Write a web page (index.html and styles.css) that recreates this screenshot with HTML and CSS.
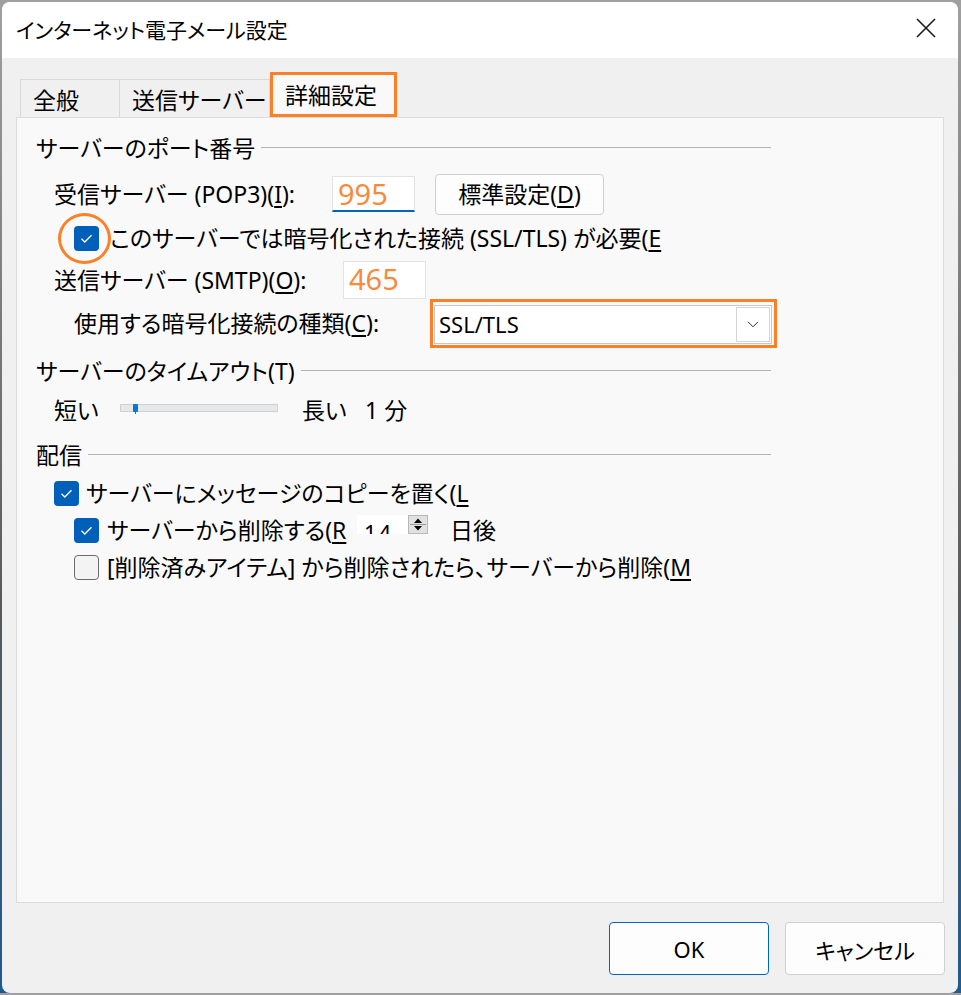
FILE: index.html
```html
<!DOCTYPE html>
<html lang="ja">
<head>
  <meta charset="UTF-8">
  <title>インターネット電子メール設定</title>
  <link rel="stylesheet" href="styles.css">
</head>
<body>
  <div class="window">
    <div class="titlebar">
      <span class="title">インターネット電子メール設定</span>
      <svg class="close" width="20" height="20" viewBox="0 0 20 20">
        <path d="M1 1 L19 19 M19 1 L1 19" stroke="#1b1b1b" stroke-width="1.6" fill="none"/>
      </svg>
    </div>

    <div class="content">
      <div class="tabs">
        <div class="tab tab-general">全般</div>
        <div class="tab tab-send">送信サーバー</div>
        <div class="tab tab-active">詳細設定</div>
      </div>

      <div class="panel">
        <div class="group-head">サーバーのポート番号</div>

        <div class="row r-pop">
          <span class="lbl-pop">受信サーバー (POP3)(<u>I</u>):</span>
          <div class="num-input active-input">995</div>
          <div class="std-btn">標準設定(<u>D</u>)</div>
        </div>

        <div class="row r-ssl">
          <span class="check checked ringed">
            <svg width="25" height="25" viewBox="0 0 25 25"><path d="M7.5 12.8 L10.8 16 L17.5 9.3" stroke="#fff" stroke-width="1.4" fill="none"/></svg>
            <span class="ring"></span>
          </span>
          <span class="ssl-text">このサーバーでは暗号化された接続 (SSL/TLS) が必要(<u>E</u></span>
        </div>

        <div class="row r-smtp">
          <span class="lbl-smtp">送信サーバー (SMTP)(<u>O</u>):</span>
          <div class="num-input">465</div>
        </div>

        <div class="row r-type">
          <span class="lbl-type">使用する暗号化接続の種類(<u>C</u>):</span>
          <div class="select-mark">
            <div class="select">
              <span class="select-value">SSL/TLS</span>
              <span class="select-btn">
                <svg width="12" height="7" viewBox="0 0 12 7"><path d="M1 0.8 L6 5.8 L11 0.8" stroke="#333" stroke-width="1" fill="none"/></svg>
              </span>
            </div>
          </div>
        </div>

        <div class="group-head h2">サーバーのタイムアウト(T)</div>

        <div class="row r-slider">
          <span class="lbl-short">短い</span>
          <div class="track"><span class="thumb"></span></div>
          <span class="lbl-long">長い</span>
          <span class="minutes">1 分</span>
        </div>

        <div class="group-head h3">配信</div>

        <div class="row r-c1">
          <span class="check checked">
            <svg width="25" height="25" viewBox="0 0 25 25"><path d="M7.5 12.8 L10.8 16 L17.5 9.3" stroke="#fff" stroke-width="1.4" fill="none"/></svg>
          </span>
          <span class="c1-text">サーバーにメッセージのコピーを置く(<u>L</u></span>
        </div>

        <div class="row r-c2">
          <span class="check checked">
            <svg width="25" height="25" viewBox="0 0 25 25"><path d="M7.5 12.8 L10.8 16 L17.5 9.3" stroke="#fff" stroke-width="1.4" fill="none"/></svg>
          </span>
          <span class="c2-text c2-label">サーバーから削除する(<u>R</u></span>
          <div class="spin">
            <span class="spin-value">14</span>
            <span class="spin-arrows">
              <svg width="20" height="19" viewBox="0 0 20 19">
                <path d="M6 8 L10 3.5 L14 8 Z" fill="#000"/>
                <path d="M6 11 L10 15.5 L14 11 Z" fill="#000"/>
                <path d="M2 9.5 H18" stroke="#9a9a9a" stroke-width="1"/>
              </svg>
            </span>
          </div>
          <span class="days">日後</span>
        </div>

        <div class="row r-c3">
          <span class="check"></span>
          <span class="c2-text">[削除済みアイテム] から削除されたら、サーバーから削除(<u>M</u></span>
        </div>
      </div>

      <div class="footer">
        <div class="btn btn-ok">OK</div>
        <div class="btn">キャンセル</div>
      </div>
    </div>
  </div>
</body>
</html>
```

FILE: styles.css
```css
body {
  margin: 0;
  background: linear-gradient(#a0a0a0, #5a5a5a 60%, #1f5b8f);
  font-family: "Noto Sans", "Noto Sans CJK JP", sans-serif;
  font-feature-settings: "palt";
  color: #000;
}
.window {
  margin: 2px 3px 0 2px;
  height: 991px;
  background: #f0f0f0;
  border-radius: 8px;
  overflow: hidden;
  display: flex;
  flex-direction: column;
}
.titlebar {
  height: 56px;
  background: #fff;
  display: flex;
  align-items: center;
  justify-content: space-between;
  padding: 0 22px 0 14px;
}
.title {
  font-size: 21px;
  line-height: 26px;
}
.close {
  margin-top: -4px;
}
.content {
  flex: 1;
  display: flex;
  flex-direction: column;
  padding: 14px 13px 18px 14px;
}
.tabs {
  display: flex;
  align-items: flex-end;
  padding-left: 4px;
  height: 45px;
}
.tab {
  box-sizing: border-box;
  height: 38px;
  border: 1px solid #d9d9d9;
  border-bottom: none;
  padding-left: 12px;
  font-size: 23px;
  line-height: 28px;
  white-space: nowrap;
  display: flex;
  align-items: center;
  padding-top: 3px;
}
.tab-general {
  width: 100px;
}
.tab-send {
  width: 150px;
  border-left: none;
}
.tab-active {
  width: 127px;
  height: 45px;
  border: 3px solid #fb8027;
  background: #f9f9f9;
  padding-top: 0;
}
.panel {
  box-sizing: border-box;
  width: 928px;
  height: 786px;
  border: 1px solid #dcdcdc;
  background: #f9f9f9;
  padding: 18px 0 0 19px;
}
.group-head {
  display: flex;
  align-items: center;
  width: 735px;
  height: 24px;
  font-size: 23px;
  line-height: 24px;
  white-space: nowrap;
}
.group-head::after {
  content: "";
  flex: 1;
  border-top: 1px solid #b4b4b4;
  margin-left: 6px;
  margin-top: -2px;
}
.group-head.h2 {
  margin-top: 12px;
}
.group-head.h3 {
  margin-top: 19px;
}
.row {
  display: flex;
  align-items: center;
  font-size: 23px;
  line-height: 28px;
  white-space: nowrap;
}
u {
  text-underline-offset: 3px;
}
.r-pop {
  height: 42px;
  margin-top: 13px;
  padding-left: 18px;
}
.lbl-pop {
  width: 278px;
}
.num-input {
  box-sizing: border-box;
  width: 83px;
  height: 38px;
  background: #fff;
  border: 1px solid #e3e3e3;
  font-size: 29px;
  line-height: 34px;
  color: #f98a3c;
  padding-left: 5px;
}
.active-input {
  height: 36px;
  border-bottom: 2px solid #0067c0;
}
.std-btn {
  box-sizing: border-box;
  margin-left: 20px;
  width: 169px;
  height: 41px;
  border: 1px solid #cfcfcf;
  border-radius: 4px;
  background: #fdfdfd;
  display: flex;
  align-items: center;
  justify-content: center;
}
.r-ssl {
  height: 46px;
  padding-left: 38px;
}
.check {
  position: relative;
  box-sizing: border-box;
  flex: none;
  width: 25px;
  height: 25px;
  border-radius: 4px;
  border: 1px solid #6a6a6a;
  background: #f3f3f3;
}
.check.checked {
  border: none;
  background: #005fb8;
}
.check svg {
  display: block;
}
.ring {
  position: absolute;
  left: -16px;
  top: -13px;
  width: 53px;
  height: 51px;
  box-sizing: border-box;
  border: 3px solid #fb8027;
  border-radius: 50%;
}
.ssl-text {
  margin-left: 11px;
}
.r-smtp {
  height: 38px;
  padding-left: 18px;
}
.lbl-smtp {
  width: 289px;
}
.r-type {
  height: 48px;
  padding-left: 38px;
}
.lbl-type {
  width: 356px;
}
.select-mark {
  border: 3px solid #fb8027;
  padding: 3px 2px 1px 1px;
}
.select {
  box-sizing: border-box;
  width: 338px;
  height: 39px;
  background: #fff;
  border: 1px solid #c8c8c8;
  display: flex;
  align-items: center;
  justify-content: space-between;
  padding: 0 1px 0 4px;
}
.select-value {
  font-size: 22px;
}
.select-btn {
  box-sizing: border-box;
  width: 34px;
  height: 35px;
  border: 1px solid #d4d4d4;
  display: flex;
  align-items: center;
  justify-content: center;
}
.r-slider {
  height: 28px;
  margin-top: 13px;
  padding-left: 18px;
}
.lbl-short {
  width: 66px;
}
.track {
  position: relative;
  box-sizing: border-box;
  width: 158px;
  height: 8px;
  background: #e6e8e9;
  border: 1px solid #d0d0d0;
  margin-top: -4px;
}
.thumb {
  position: absolute;
  left: 12px;
  top: -1px;
  width: 5px;
  height: 8px;
  background: #0078d4;
  border-radius: 1px;
}
.thumb::after {
  content: "";
  position: absolute;
  left: 2px;
  top: 8px;
  width: 1px;
  height: 2px;
  background: #0078d4;
}
.lbl-long {
  margin-left: 24px;
  width: 63px;
}
.r-c1 {
  height: 26px;
  margin-top: 13px;
  padding-left: 18px;
}
.c1-text {
  margin-left: 7px;
}
.r-c2 {
  height: 26px;
  margin-top: 11px;
  padding-left: 38px;
}
.c2-text {
  margin-left: 8px;
}
.c2-label {
  width: 250px;
}
.spin {
  align-self: flex-start;
  margin-top: -2px;
  width: 71px;
  height: 19px;
  display: flex;
  background: #fff;
  overflow: hidden;
}
.spin-value {
  width: 44px;
  padding: 7px 0 0 7px;
  line-height: 20px;
  font-size: 22px;
  letter-spacing: 2px;
}
.spin-arrows {
  box-sizing: border-box;
  width: 20px;
  height: 19px;
  background: #e1e1e1;
  border: 1px solid #b8b8b8;
}
.spin-arrows svg {
  display: block;
  margin: -1px;
}
.days {
  margin-left: 22px;
}
.r-c3 {
  height: 26px;
  margin-top: 11px;
  padding-left: 38px;
}
.footer {
  display: flex;
  justify-content: flex-end;
  gap: 16px;
  margin-top: 19px;
}
.btn {
  box-sizing: border-box;
  width: 160px;
  height: 53px;
  border: 1px solid #d0d0d0;
  border-radius: 4px;
  background: #fdfdfd;
  font-size: 22px;
  display: flex;
  align-items: center;
  justify-content: center;
}
.btn-ok {
  border-color: #0067c0;
}
```
